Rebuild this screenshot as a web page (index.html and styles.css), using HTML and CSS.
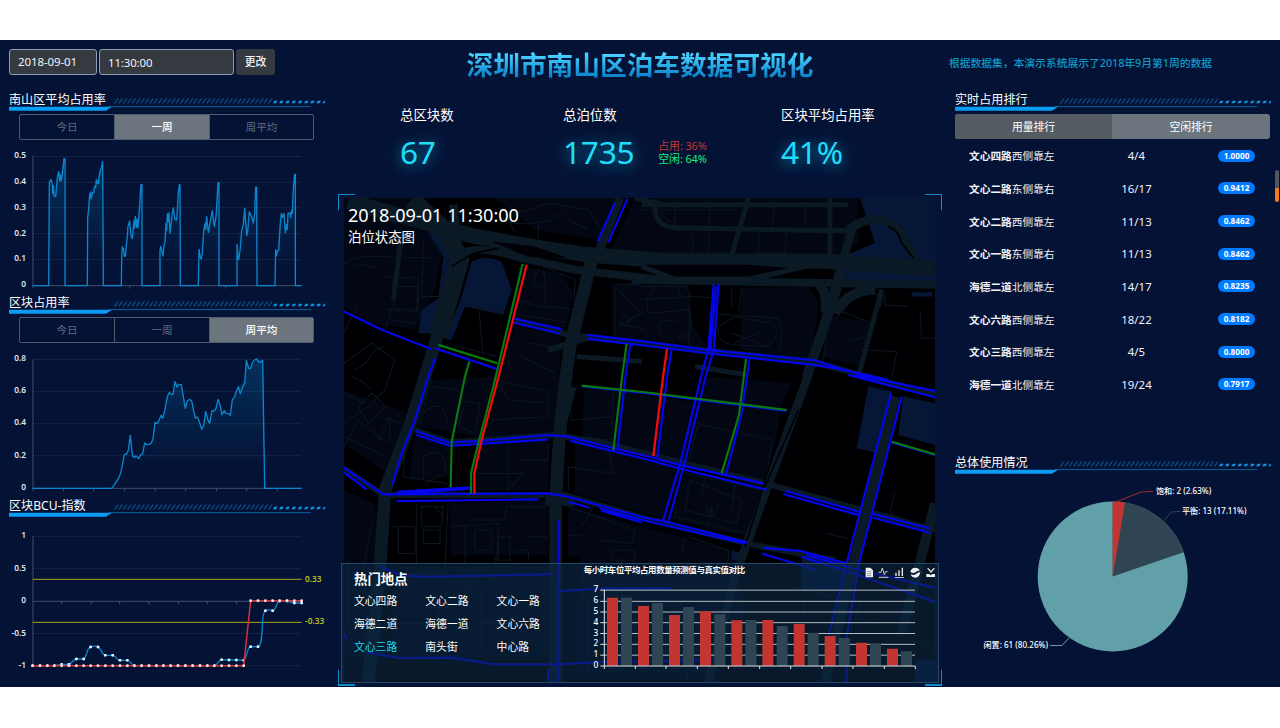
FILE: index.html
```html
<!DOCTYPE html>
<html lang="zh-CN">
<head>
<meta charset="utf-8">
<title>深圳市南山区泊车数据可视化</title>
<link rel="stylesheet" href="styles.css">
</head>
<body>
<svg class="defs" width="0" height="0" aria-hidden="true">
  <defs>
    <pattern id="hatch" width="4.4" height="6" patternUnits="userSpaceOnUse" x="105" y="6"><path d="M0.4 5.5L4 .5" stroke="#0b5f98" stroke-width="1"/></pattern>
    <pattern id="dash" width="6.2" height="4" patternUnits="userSpaceOnUse" x="264" y="8"><path d="M0 3.2L1.5 .8H4.400L2.900 3.2Z" fill="#109cec"/></pattern>
    <linearGradient id="area" x1="0" y1="0" x2="0" y2="1"><stop offset="0" stop-color="#0090d8" stop-opacity=".24"/><stop offset=".85" stop-color="#0090d8" stop-opacity="0"/></linearGradient>
    <marker id="dot" markerUnits="userSpaceOnUse" markerWidth="10" markerHeight="10" refX="5" refY="5"><circle cx="5" cy="5" r="4.4" fill="#e8f4fc"/></marker>
    <marker id="dotRed" markerUnits="userSpaceOnUse" markerWidth="10" markerHeight="10" refX="5" refY="5"><circle cx="5" cy="5" r="4.4" fill="#fff" stroke="#e04848" stroke-width="1"/></marker>
    <symbol id="deco" viewBox="0 0 316 20">
      <rect x="105" y="6" width="158.5" height="6" fill="url(#hatch)"/>
      <rect x="264" y="8" width="52" height="4" fill="url(#dash)"/>
      <path d="M100 14.6H302" stroke="#0b5f98" stroke-width="1"/>
      <path d="M0 14.7H103L97 18.7H0Z" fill="#0b9cf4"/>
    </symbol>
  </defs>
</svg>
<div class="app">
  <aside class="left">
    <form class="picker">
      <span class="field date">2018-09-01</span>
      <span class="field time">11:30:00</span>
      <span class="change">更改</span>
    </form>

    <section class="block b1">
      <header class="head"><svg class="deco"><use href="#deco"/></svg><h2>南山区平均占用率</h2></header>
      <div class="tabs"><span>今日</span><span class="on">一周</span><span>周平均</span></div>
      <svg class="chart" viewBox="0 315 1020 441">
        <path class="grid" d="M98 349.5H905M98 427H905M98 503H905M98 581H905M98 659H905"/>
        <path class="axis" d="M99 349V745M98 737H905M389 737v9M677 737v9"/>
        <path class="area" d="M146 737L148 428L153 418L158 460L164 470L173 398L182 400L192 355L194 737ZM262 737L263 535L270 460L290 420L308 365L310 737ZM364 737L367 620L374 650L388 545L397 595L405 530L414 560L424 434L426 737ZM480 737L482 620L503 520L512 570L520 510L530 540L539 434L541 737ZM595 737L597 628L620 530L626 575L636 515L646 560L655 428L657 737ZM710 737L712 613L734 505L742 585L748 515L760 545L769 441L771 737ZM825 737L827 629L844 520L858 575L864 520L876 515L885 403L887 737Z"/>
        <path class="line" d="M98 737H146L148 428L153 418L157 434L158 460L161 437L162 468L167 470L172 412L176 395L179 423L181 405L184 422L189 385L192 355L195 357V737H262L263 535L266 505L269 462L272 456L273 477L278 457L281 459L284 440L287 442L289 419L292 430L295 431L298 407L301 390L304 384L308 365L310 737H364L365 658L367 620L371 628L373 649L376 648L382 588L384 559L389 543L393 588L397 596L402 542L403 564L406 529L409 563L411 537L414 563L418 509L423 434L426 434V737H480V632L482 619L486 637L489 648L492 616L495 605L498 550L500 570L502 521L505 544L507 518L510 580L514 546L517 518L520 504L525 539L530 540L535 458L538 434L540 434L541 737H595L597 628L601 654L604 657L607 638L611 575L615 551L617 568L620 530L625 577L630 549L637 512L643 560L648 530L654 428L657 428V737H711V613L714 655L716 659L721 624L725 572L730 554L734 505L740 587L743 574L748 515L754 528L760 549L764 521L767 441L770 442L771 737H825L827 629L830 647L832 634L836 632L841 550L844 520L848 533L852 520L856 578L860 553L862 568L864 520L870 519L872 533L875 511L877 519L880 444L884 403L886 403V737H905"/>
        <g class="tick"><text x="78" y="354">0.5</text><text x="78" y="432">0.4</text><text x="78" y="509">0.3</text><text x="78" y="588">0.2</text><text x="78" y="664">0.1</text><text x="78" y="742">0</text></g>
      </svg>
    </section>

    <section class="block b2">
      <header class="head"><svg class="deco"><use href="#deco"/></svg><h2>区块占用率</h2></header>
      <div class="tabs"><span>今日</span><span>一周</span><span class="on">周平均</span></div>
      <svg class="chart" viewBox="0 174 1020 441">
        <path class="grid" d="M98 208H905M98 304H905M98 401H905M98 497H905"/>
        <path class="axis" d="M99 208V603M98 595H905M191 595v9M281 595v9M374 595v9M466 595v9M557 595v9M650 595v9M740 595v9M832 595v9"/>
        <path class="area" d="M336 595L362 550L374 493L383 480L391 436L398 498L427 493L436 460L455 455L465 398L490 375L502 320L521 314L526 275L545 288L557 352L573 330L587 382L605 419L618 363L629 400L640 362L655 328L667 372L690 376L700 325L715 290L735 270L740 211L750 235L769 207L790 212L794 595Z"/>
        <path class="line" d="M98 595H336L355 566L362 550L368 520L373 493H379L385 481L391 436L395 478L398 499L404 502L407 498L411 500L416 506L423 493L428 492L434 459L440 464L449 463L454 459L459 446L465 397L471 401L476 394L483 376L488 385L494 363L502 320L508 308L512 313L519 314L525 275L531 291L537 284L544 284L549 314L556 355L562 333L569 328L575 333L581 362L586 384L592 381L598 395L605 418L611 407L617 364L624 391L629 400L636 362L642 363L648 356L654 328L660 344L666 374L673 362L678 371L686 371L691 376L697 329L703 322L708 306L715 290L721 311L728 291L734 280L739 211L746 235L751 236L758 216L764 210L770 207L777 217L783 216L788 211L794 595H905"/>
        <g class="tick"><text x="78" y="212">0.8</text><text x="78" y="309">0.6</text><text x="78" y="406">0.4</text><text x="78" y="503">0.2</text><text x="78" y="600">0</text></g>
      </svg>
    </section>

    <section class="block b3">
      <header class="head"><svg class="deco"><use href="#deco"/></svg><h2>区块BCU-指数</h2></header>
      <svg class="chart" viewBox="0 105 1020 465">
        <path class="grid" d="M98 139H905M98 236H905M98 430H905M98 527H905"/>
        <path class="axis" d="M99 139V527M98 334H905M185 334v9M274 334v9M359 334v9M447 334v9M536 334v9M622 334v9M710 334v9"/>
        <path d="M98 268H905M98 397H905" stroke="#a5a81e" stroke-width="3"/>
        <path class="line dots" d="M98 527L120 527L142 527L163 527L185 523L207 523C218 520 218 507 229 507L251 507C262 500 260 471 272 471Q283 466 294 471C305 475 305 496 316 496H338C349 496 349 511 360 511L382 511C393 511 393 527 403 527L425 527L447 527L469 527L490 527L512 527L534 527L556 527L578 527L600 527L622 527L643 527C654 527 654 509 665 509L687 510L709 510L731 511C742 505 740 470 752 470L774 470C794 465 780 370 796 362Q807 357 818 362C829 362 828 336 839 333L861 333L883 339L905 339"/>
        <polyline class="red" points="98,527 120,527 142,527 163,527 185,527 207,527 229,527 251,527 272,527 294,527 316,527 338,527 360,527 382,527 403,527 425,527 447,527 469,527 490,527 512,527 534,527 556,527 578,527 600,527 622,527 643,527 665,527 687,527 709,527 731,527 752,332 774,332 796,332 818,332 839,332 861,332 883,332 905,332"/>
        <g class="tick"><text x="78" y="145">1</text><text x="78" y="243">0.5</text><text x="78" y="339">0</text><text x="78" y="437">-0.5</text><text x="78" y="533">-1</text></g>
        <g class="mark"><text x="915" y="275">0.33</text><text x="915" y="403">-0.33</text></g>
      </svg>
    </section>
  </aside>

  <main class="center">
    <h1>深圳市南山区泊车数据可视化</h1>
    <div class="stats">
      <div class="stat s1"><h3>总区块数</h3><b>67</b></div>
      <div class="stat s2"><h3>总泊位数</h3><div class="pair"><b>1735</b><p><span class="used">占用: 36%</span><span class="free">空闲: 64%</span></p></div></div>
      <div class="stat"><h3>区块平均占用率</h3><b>41%</b></div>
    </div>
    <div class="frame">
      <svg class="map" viewBox="27 25 1773 1450" preserveAspectRatio="none">
        <rect x="27" y="25" width="1773" height="1450" fill="#000002"/>
        <!-- city blocks -->
        <g fill="#020713">
          <path d="M27 25H250L330 150L300 300L240 420L100 400L27 350ZM480 25H860L790 150L600 120ZM900 25H1570V160L1480 205H900L830 180ZM550 230L680 250L715 310L690 425L540 390ZM830 280L1060 285L1070 400L1115 470L830 440ZM1220 295L1420 290L1450 340L1430 510L1215 480ZM540 410L680 435L660 740L445 760L530 450ZM1490 375L1610 400L1580 530L1460 500ZM290 570L480 560L430 740L250 710ZM240 740L345 765V860L220 870ZM425 760L640 745V900H425ZM750 590L1100 640L1050 810L740 740ZM1115 560L1370 580L1340 640L1300 900L1060 810ZM720 750L1050 830L980 985L720 910ZM1050 840L1285 890L1240 1040L1010 990ZM345 940L640 930V1095H345ZM700 950L1180 1080V1100H700ZM27 600L220 670L170 860L27 760Z"/>
          <path d="M27 900L120 940L150 1400H27ZM740 1010L1200 1090L1230 1280L1120 1450H720ZM180 1130H640V1400H160Z"/>
        </g>
        <g fill="#061636">
          <path d="M1575 25H1800V280H1540L1500 210L1620 160ZM410 215Q450 195 500 215L530 300L505 375L390 350L350 450H330L380 320ZM320 110L350 200L330 320L300 430L250 430L260 360L310 325L325 200L280 130ZM1600 590L1670 605L1630 790L1565 775ZM1705 620L1800 640V765L1690 735ZM1290 270H1510V280H1300ZM1730 307H1792V320H1730ZM1190 1080L1220 1090V1110H1190ZM1400 1100L1530 1120V1200H1400ZM1740 1410H1800V1475H1740Z"/>
        </g>
        <!-- local streets -->
        <g class="lane">
          <path d="M27 225Q50 195 130 200L300 205M55 230Q80 220 125 235M205 130L175 340L150 420M150 260L250 265L245 365L150 360M165 390L240 400M265 150L260 320L325 320M65 350L27 430M185 290H250V360L180 355M27 520L110 460L180 510L150 600L100 650L27 700M50 560Q80 570 110 600M27 610L90 640M60 540Q100 520 105 500T150 470"/>
          <path d="M480 60Q500 120 640 95L690 60M610 95V145M550 70L640 40L760 60L800 120M700 90L760 120M500 50L540 130M600 220L720 270L715 400L550 375M560 330Q620 360 650 350L715 360M615 235Q580 280 610 290Q640 300 625 240M630 290V340M840 290V435M850 285H915M850 400L930 420M850 300L920 370L850 410M870 380a13 13 0 1 0 1 0M430 345L445 500M355 465L485 500M390 340L510 365M580 460L670 475M560 500L660 550"/>
          <path d="M960 60L1025 110L1280 118H1540M1020 30V110M1125 30L1120 195M1210 60H915M1070 120L1075 210M1320 30L1310 120M1270 120V190H1350L1355 125M1410 35V125M915 190H1075L1190 190M915 290H1050L1065 310L1060 470M915 330L1070 320L1150 325M960 290L935 330L940 370L1060 360L1070 400L1060 450M1030 290V330M975 440V395L1030 390M1040 430a9 9 0 1 0 1 0M1120 370L1330 385L1340 415L1335 490M1190 295V355M1220 295L1210 370M1150 410L1200 380L1310 400L1330 430L1300 470L1200 465Q1140 460 1150 410ZM1190 430L1300 470M1290 420L1195 460M1470 310Q1480 440 1460 540M1520 365L1610 400L1650 320L1580 300M1590 480L1685 485L1670 565M1590 440L1540 455M1650 310V345L1720 350M1755 365L1760 445H1800M1520 370Q1560 310 1630 295"/>
          <path d="M250 700Q270 640 320 650L340 700M290 570L250 710M280 590L370 600M390 635L435 640L420 730L370 710L390 640M470 690L640 680L640 605L480 570M480 570Q520 620 520 630L640 640M520 750V900L565 850H420M550 810H640V760M210 760L205 860L340 880M265 870V800Q310 770 330 810V850L270 880M700 740L830 750L835 600M715 590Q700 630 710 690L830 680M700 830L835 850L815 750M700 830V900M130 680L200 700M165 680V750L130 750ZM27 740L155 800M27 770L70 690L145 750M70 650L110 610L155 650L100 700Z"/>
          <path d="M340 930L330 1130M245 940V1130M260 945V1010H320L325 950H255M300 950l25 30M170 1010H240V1090M190 1010V1090H240M265 1020H315V1060H265ZM345 1010L490 1000L485 1110M400 990H510L515 950H635M390 1010V1120M420 1020H470V1080H420ZM490 1040H525V1110H490ZM540 1080H580V1110M580 1040H640M700 1035H740M740 1010L780 940M700 950L900 1020L890 1060L800 1050M830 1080H900V1110H830ZM1055 850L1280 900L1275 960L1235 1030L1020 980V870M1065 870L1050 960L1205 1000L1220 930ZM1110 860L1100 920M1200 880L1190 960M1115 930V970M1130 945V980M1150 935L1145 960M1130 960a9 9 0 1 0 1 0M1120 990L1110 1030M1060 1040L1180 1080V1110M1050 1040L1040 1095M1080 700L1310 750L1300 830M1090 700L1060 810M1680 900L1665 970L1700 985M1475 1030L1540 1045"/>
          <path d="M40 1110V1300L60 1400M110 1000L90 1110V1400M160 1150H330V1250H170M190 1210L310 1220V1300H170M345 1190L440 1210V1380M390 1150V1400M480 1100V1400M540 1120V1300H420M700 1200L900 1220V1410M760 1230V1450M860 1100V1380M930 1150V1400M1000 1130L1060 1470M1080 1160L1020 1280M1200 1300V1450M1500 1250L1800 1380M1550 1300V1450M1330 1180L1530 1230M1410 1230L1390 1350M1600 1180L1560 1290"/>
        </g>
        <!-- arterial roads -->
        <g class="road">
          <path stroke-width="46" d="M40 35L240 90L420 140L620 175L760 195L1000 214H1480L1560 222L1800 236"/>
          <path stroke-width="24" d="M380 190Q440 165 560 205L720 240L960 268H1230L1370 235L1480 210M890 270L1800 285M920 225L1020 265"/>
          <path stroke-width="56" d="M230 30L335 130L375 210L340 330L310 440"/>
          <path stroke-width="38" d="M310 430L230 690L150 900L135 1130L100 1475M770 210L735 350L705 470L685 620L672 760L662 930V1475"/>
          <path stroke-width="26" d="M355 45L370 200M855 25L790 190M1540 120Q1620 60 1690 120L1740 205M1550 120L1490 330L1420 555L1290 910L1200 1160L1120 1475"/>
          <path stroke-width="30" d="M1520 250L1460 430L1415 560M1620 300Q1540 300 1500 370M1450 280Q1480 310 1470 370M1680 620L1555 1120L1470 1475M1800 940L1700 1330M630 930L720 935M680 700L710 590"/>
          <path stroke-width="15" d="M1240 25L1185 215M1485 25V210M960 30Q950 110 1020 114L1540 124L1575 100M1640 300L1570 560M900 25L980 45M725 500L920 515M1080 530L1240 555M920 45H1540M175 330L200 130"/>
          <path stroke-width="18" d="M240 720L345 757L660 735L790 755L1290 880L1800 1020M27 835L145 915H690L930 985L1260 1065L1500 1110M540 392L700 435L1140 485L1430 515L1800 615M640 480L770 440"/>
        </g>
        <path d="M470 155L600 170L700 205L580 200ZM930 225H1240L1360 235L1240 260H1020Z" fill="#000006"/>
        <path d="M1660 110Q1690 120 1700 160L1735 205M350 230Q380 210 420 190L490 175M1340 705L1230 1070M1390 660L1290 890" stroke="#000004" stroke-width="5" fill="none"/>
        <!-- parking segments -->
        <g class="seg blue">
          <path d="M27 365L140 420L290 478M300 475L485 537M300 505L280 560L240 690L200 790L172 885M840 40L788 155M877 28L820 158"/>
          <path d="M537 386L678 418M533 398L676 431M755 435L920 454L1115 480L1440 511L1535 542L1650 573M757 447L920 466L1115 490L1430 524L1510 536L1658 570M1540 555L1800 622M1560 555L1800 603"/>
          <path d="M1136 283L1120 480L1098 560L1037 815L983 995M1151 283L1136 480L1112 560L1050 815L1000 995M1143 290L1126 480M1010 478L997 555L967 803M1243 508L1237 555L1219 675L1173 852M886 465L872 555L847 780M740 589L930 610L1355 663"/>
          <path d="M240 722L340 757L430 753L640 735L700 740L830 773L930 797L1040 826L1285 880M244 735L345 768L640 748M705 752L930 807L1040 837L1295 899M1350 902L1575 966M1345 912L1572 975M1610 970L1785 1015M1612 982L1785 1028"/>
          <path d="M27 833L145 913L640 910L700 920L930 983L990 994L1238 1057M27 848L95 898M185 905L405 892M185 912L405 896M185 933L610 928M700 935L765 953M795 955L930 992L1230 1060M800 962L920 997M1285 1073L1395 1082L1535 1120M1280 1090L1440 1138"/>
          <path d="M1668 610L1535 1120L1480 1340M1700 620L1572 1120L1535 1340V1475M672 990V1100L668 1475M640 1435V1475M135 1130L200 1155L270 1160L650 1152M675 1202L810 1195H1010M27 1330L35 1348M95 1385L190 1403L350 1402L480 1422H665L800 1415L1135 1410M1400 1100L1540 1145L1800 1235M1415 1095L1555 1135L1800 1193"/>
          <path d="M1670 757L1800 795"/>
        </g>
        <g class="seg green"><path d="M563 222L480 570L430 760L408 850V910M310 465L487 520M403 515L390 560L350 755L347 892M740 587L930 607L1355 660M875 462L862 555L835 780M1233 507L1227 555L1212 675L1160 850M1670 755L1800 793"/></g>
        <g class="seg redseg"><path d="M575 225L491 560L440 750L418 850V910M996 478L985 555L955 798"/></g>
      </svg>
      <div class="caption"><strong>2018-09-01 11:30:00</strong><span>泊位状态图</span></div>
      <i class="corner tl"></i><i class="corner tr"></i><i class="corner bl"></i><i class="corner br"></i>
      <div class="hot">
        <div class="places">
          <h4>热门地点</h4>
          <ul>
            <li>文心四路</li><li>文心二路</li><li>文心一路</li>
            <li>海德二道</li><li>海德一道</li><li>文心六路</li>
            <li class="sel">文心三路</li><li>南头街</li><li>中心路</li>
          </ul>
        </div>
        <svg class="bars" viewBox="735 24 1077 360">
          <path d="M808 105.500H1740M808 139H1740M808 171H1740M808 203H1740M808 235.500H1740M808 268H1740M808 300.500H1740" stroke="#b6bec4" stroke-width="3"/>
          <g fill="#c23531"><path d="M816 128h33V332h-33zM909 153h33V332h-33zM1002 180h33V332h-33zM1095 169h33V332h-33zM1189 196h33V332h-33zM1282 195h33V332h-33zM1376 207h33V332h-33zM1469 243h33V332h-33zM1563 263h33V332h-33zM1656 281h33V332h-33z"/></g>
          <g fill="#2f4554"><path d="M858 128h33V332h-33zM951 144h33V332h-33zM1044 156h33V332h-33zM1138 178h33V332h-33zM1231 195h33V332h-33zM1325 213h33V332h-33zM1418 233h33V332h-33zM1511 249h33V332h-33zM1605 266h33V332h-33zM1698 289h33V332h-33z"/></g>
          <path d="M808 104V342M796 105.500h12M796 139h12M796 171h12M796 203h12M796 235.500h12M796 268h12M796 300.500h12M796 333H1740M901 333v9M993 333v9M1087 333v9M1180 333v9M1274 333v9M1367 333v9M1461 333v9M1554 333v9M1648 333v9M1741 333v9" fill="none" stroke="#e4e8ea" stroke-width="3"/>
          <g class="num"><text x="790" y="110">7</text><text x="790" y="144">6</text><text x="790" y="176">5</text><text x="790" y="210">4</text><text x="790" y="242">3</text><text x="790" y="274">2</text><text x="790" y="307">1</text><text x="790" y="339">0</text></g>
          <text class="bar-title" x="746" y="54">每小时车位平均占用数量预测值与真实值对比</text>
          <g transform="translate(915 0)" fill="#f2f2f2" stroke="none">
            <path d="M677 38h14l8 8v21h-22z"/><path d="M681 50h13M681 56h13M681 62h13" stroke="#687682" stroke-width="2"/>
            <path d="M716 52h7l4-13 6 20 4-9h6M716 67h29" fill="none" stroke="#f2f2f2" stroke-width="2.500"/>
            <path d="M766 53h4v10h-4zM775 46h4v17h-4zM785 38h4v25h-4zM765 66h27v2h-27z"/>
            <path d="M811 50Q814 38 826 38Q836 38 840 46Q832 48 826 52Q818 57 811 50ZM841 51Q839 67 826 68Q815 68 812 58Q820 62 828 57Q834 52 841 51Z"/>
            <path d="M861 40h5l7 8 7-8h5l-12 14zM859 57h8l5 4 5-4h8v9h-26z"/>
          </g>
        </svg>
      </div>
    </div>
  </main>

  <aside class="right">
    <p class="notice">根据数据集，本演示系统展示了2018年9月第1周的数据</p>
    <section class="block r1">
      <header class="head"><svg class="deco"><use href="#deco"/></svg><h2>实时占用排行</h2></header>
      <div class="switch"><span class="on">用量排行</span><span>空闲排行</span></div>
      <ul class="rank">
        <li><span><b>文心四路</b>西侧靠左</span><em>4/4</em><i>1.0000</i></li>
        <li><span><b>文心二路</b>东侧靠右</span><em>16/17</em><i>0.9412</i></li>
        <li><span><b>文心二路</b>西侧靠左</span><em>11/13</em><i>0.8462</i></li>
        <li><span><b>文心一路</b>东侧靠右</span><em>11/13</em><i>0.8462</i></li>
        <li><span><b>海德二道</b>北侧靠左</span><em>14/17</em><i>0.8235</i></li>
        <li><span><b>文心六路</b>西侧靠左</span><em>18/22</em><i>0.8182</i></li>
        <li><span><b>文心三路</b>西侧靠左</span><em>4/5</em><i>0.8000</i></li>
        <li><span><b>海德一道</b>北侧靠左</span><em>19/24</em><i>0.7917</i></li>
      </ul>
    </section>
    <section class="block r2">
      <header class="head"><svg class="deco"><use href="#deco"/></svg><h2>总体使用情况</h2></header>
      <svg class="pie" viewBox="955 475 325 205">
        <circle cx="1112.700" cy="576.500" r="75" fill="#61a0a8"/>
        <path d="M1112.700 576.500V501.500A75 75 0 0 1 1183.600 552.200Z" fill="#2f4554"/>
        <path d="M1112.700 576.500V501.500A75 75 0 0 1 1125 502.500Z" fill="#c23531"/>
        <g fill="none" stroke-width="1"><path d="M1116 502L1141 492L1153 491.500" stroke="#a52e34"/><path d="M1164 521L1171 512L1180 511.500" stroke="#2f4554"/><path d="M1069 638L1062 645.500H1050" stroke="#61a0a8"/></g>
        <g class="pie-label"><text x="1156" y="494.300">饱和: 2 (2.63%)</text><text x="1182" y="514.300">平衡: 13 (17.11%)</text><text x="1048" y="648" text-anchor="end">闲置: 61 (80.26%)</text></g>
      </svg>
    </section>
    <div class="scroll"></div>
  </aside>
</div>
</body>
</html>
```

FILE: styles.css
```css
* { box-sizing: border-box; margin: 0; padding: 0; }
body { background: #fff; padding: 40px 0 41px; font-family: "Noto Sans", "Noto Sans CJK SC", sans-serif; color: #f0f4fa; overflow: hidden; }
svg { display: block; }
.defs { position: absolute; }
ul { list-style: none; }
.app { height: 647px; background: #041235; display: grid; grid-template-columns: 338px 604px 338px; overflow: hidden; }
.left, .center, .right { min-width: 0; }

.picker { display: flex; gap: 2px; padding: 9px 0 0 9px; height: 48px; font-size: 11.500px; line-height: 24px; }
.field { height: 26px; background: #343a40; border: 1px solid #8f9db3; border-radius: 3px; padding-left: 8px; letter-spacing: -.1px; }
.date { width: 88px; }
.time { width: 135px; font-size: 11.400px; line-height: 25px; }
.change { width: 39px; height: 26px; line-height: 26px; background: #343a40; border-radius: 3px; text-align: center; font-size: 10.800px; font-weight: 500; }

.block { display: flex; flex-direction: column; }
.b1 { height: 207px; padding-top: 4px; }
.b2 { height: 203px; }
.b3 { height: 180px; }
.head { display: grid; width: 316px; height: 20px; margin-left: 9px; flex: none; }
.head > * { grid-area: 1 / 1; }
.deco { width: 316px; height: 20px; }
h2 { font-size: 12.100px; line-height: 15px; font-weight: 400; color: #fff; }
.tabs { display: grid; grid-template-columns: 94px 95px 104px; width: 295px; height: 26px; margin: 2px 0 0 19px; border: 1px solid #4e5b6e; border-radius: 2px; flex: none; font-size: 10.600px; line-height: 24px; text-align: center; color: #626d7d; }
.tabs span + span { border-left: 1px solid #4e5b6e; }
.tabs .on { background: #6c757d; color: #fff; font-weight: 500; }
.chart { width: 340px; height: 147px; flex: none; margin-top: 5px; overflow: visible; }
.b3 .chart { height: 155px; margin-top: 7px; }

.grid { stroke: #2d3d5c; stroke-width: 2.500; stroke-dasharray: 4 4; fill: none; }
.axis { stroke: #4a5a76; stroke-width: 2.500; fill: none; }
.line { stroke: #0b86cc; stroke-width: 4; fill: none; stroke-linejoin: round; }
.area { fill: url(#area); }
.dots { marker-start: url(#dot); marker-mid: url(#dot); marker-end: url(#dot); }
.red { stroke: #d9303a; stroke-width: 4.500; fill: none; marker-start: url(#dotRed); marker-mid: url(#dotRed); marker-end: url(#dotRed); }
.tick { fill: #dfe5ef; font-size: 25px; font-weight: 600; text-anchor: end; }
.mark { fill: #b9bf20; font-size: 25px; font-weight: 600; }

.center { display: flex; flex-direction: column; }
h1 { height: 50px; padding-top: 6px; text-align: center; font: 700 26.700px/36px "Noto Sans CJK SC", sans-serif; color: transparent; background: linear-gradient(#48d0ff 25%, #087fc8 88%) no-repeat 0 6px / 100% 36px; -webkit-background-clip: text; background-clip: text; }
.stats { display: flex; height: 104px; padding: 15px 0 0 62px; }
.s1 { width: 163px; }
.s2 { width: 218px; }
h3 { font-size: 13.400px; line-height: 21px; font-weight: 400; color: #fff; }
.stat b { display: block; font-size: 31.700px; line-height: 51px; font-weight: 400; color: #20dcfa; letter-spacing: -.3px; text-shadow: 0 2px 14px #009cc0; }
.pair { display: flex; }
.pair p { padding: 13px 0 0 24px; font-size: 10.900px; line-height: 13px; letter-spacing: -.1px; }
.pair p span { display: block; }
.used { color: #c83630; }
.free { color: #16f080; }

.frame { position: relative; height: 493px; padding: 4px 6px; }
.map { width: 591px; height: 484px; }
.lane { fill: none; stroke: #0b1721; stroke-width: 3; }
.road { fill: none; stroke: #0a1924; stroke-linejoin: round; }
.seg { fill: none; stroke-width: 6.500; stroke-linejoin: round; }
.blue { stroke: #0505ed; }
.green { stroke: #087b10; }
.redseg { stroke: #ef0b10; stroke-width: 7; }
.caption { position: absolute; left: 10px; top: 8px; display: flex; flex-direction: column; color: #fff; }
.caption strong { font-weight: 400; font-size: 18.100px; line-height: 26px; }
.caption span { font-size: 13.400px; line-height: 19px; }
.corner { position: absolute; width: 17px; height: 16px; border: 0 solid #0c8fc8; }
.tl { left: 0; top: 0; border-width: 1px 0 0 1px; }
.tr { right: 0; top: 0; border-width: 1px 1px 0 0; }
.bl { left: 0; bottom: 1px; border-width: 0 0 2px 1px; }
.br { right: 0; bottom: 1px; border-width: 0 1px 2px 0; }
.hot { position: absolute; left: 3px; top: 369px; width: 598px; height: 120px; border: 1px solid #264766; background: rgba(12, 41, 72, .6); display: flex; justify-content: space-between; }
.places { padding: 5px 0 0 12px; }
h4 { font-size: 13.400px; line-height: 20px; color: #fff; }
.places ul { display: grid; grid-template-columns: 71.300px 71.300px 50px; grid-auto-rows: 22.800px; padding-top: 1px; font-size: 10.800px; line-height: 22.800px; color: #fff; }
.sel { color: #18dcea; }
.bars { width: 359px; height: 120px; margin: -1px -1px 0 0; }
.num { fill: #fff; font-size: 25px; text-anchor: end; font-weight: 500; }
.bar-title { fill: #fff; font-size: 25.300px; font-weight: 700; letter-spacing: -1.100px; }

.right { position: relative; }
.right .head { margin-left: 13px; }
.notice { padding: 13px 0 0 7px; height: 48px; font-size: 10.780px; line-height: 20px; color: #1298c4; white-space: nowrap; font-weight: 500; }
.r1 { padding-top: 4px; height: 367px; }
.switch { display: grid; grid-template-columns: 157px 158px; width: 315px; height: 25px; margin: 2px 0 0 13px; border-radius: 3px; overflow: hidden; background: #6c757d; text-align: center; font-size: 10.800px; line-height: 25px; color: #fff; flex: none; }
.switch .on { background: #545b62; }
.rank { margin-left: 13px; width: 315px; padding-top: 1px; }
.rank li { display: grid; grid-template-columns: 134px 67px 1fr; padding: 0 14px 0 13px; height: 32.670px; align-items: center; font-size: 10.700px; border: solid #041030; border-width: 0 1px 1px; }
.rank em { font-style: normal; text-align: center; font-size: 11.400px; margin-left: 0; }
.rank i { font: 700 8.200px/12px "Noto Sans", sans-serif; justify-self: end; width: 37px; height: 12px; border-radius: 6px; background: #007bff; text-align: center; color: #fff; }
.pie { width: 325px; height: 205px; margin-left: 13px; }
.pie-label { fill: #fff; font-size: 8.100px; font-weight: 500; }
.scroll { position: absolute; right: 1px; top: 130px; width: 4px; height: 32px; border-radius: 2px; background: linear-gradient(#52565f 55%, #f47a18 55%); }
```
